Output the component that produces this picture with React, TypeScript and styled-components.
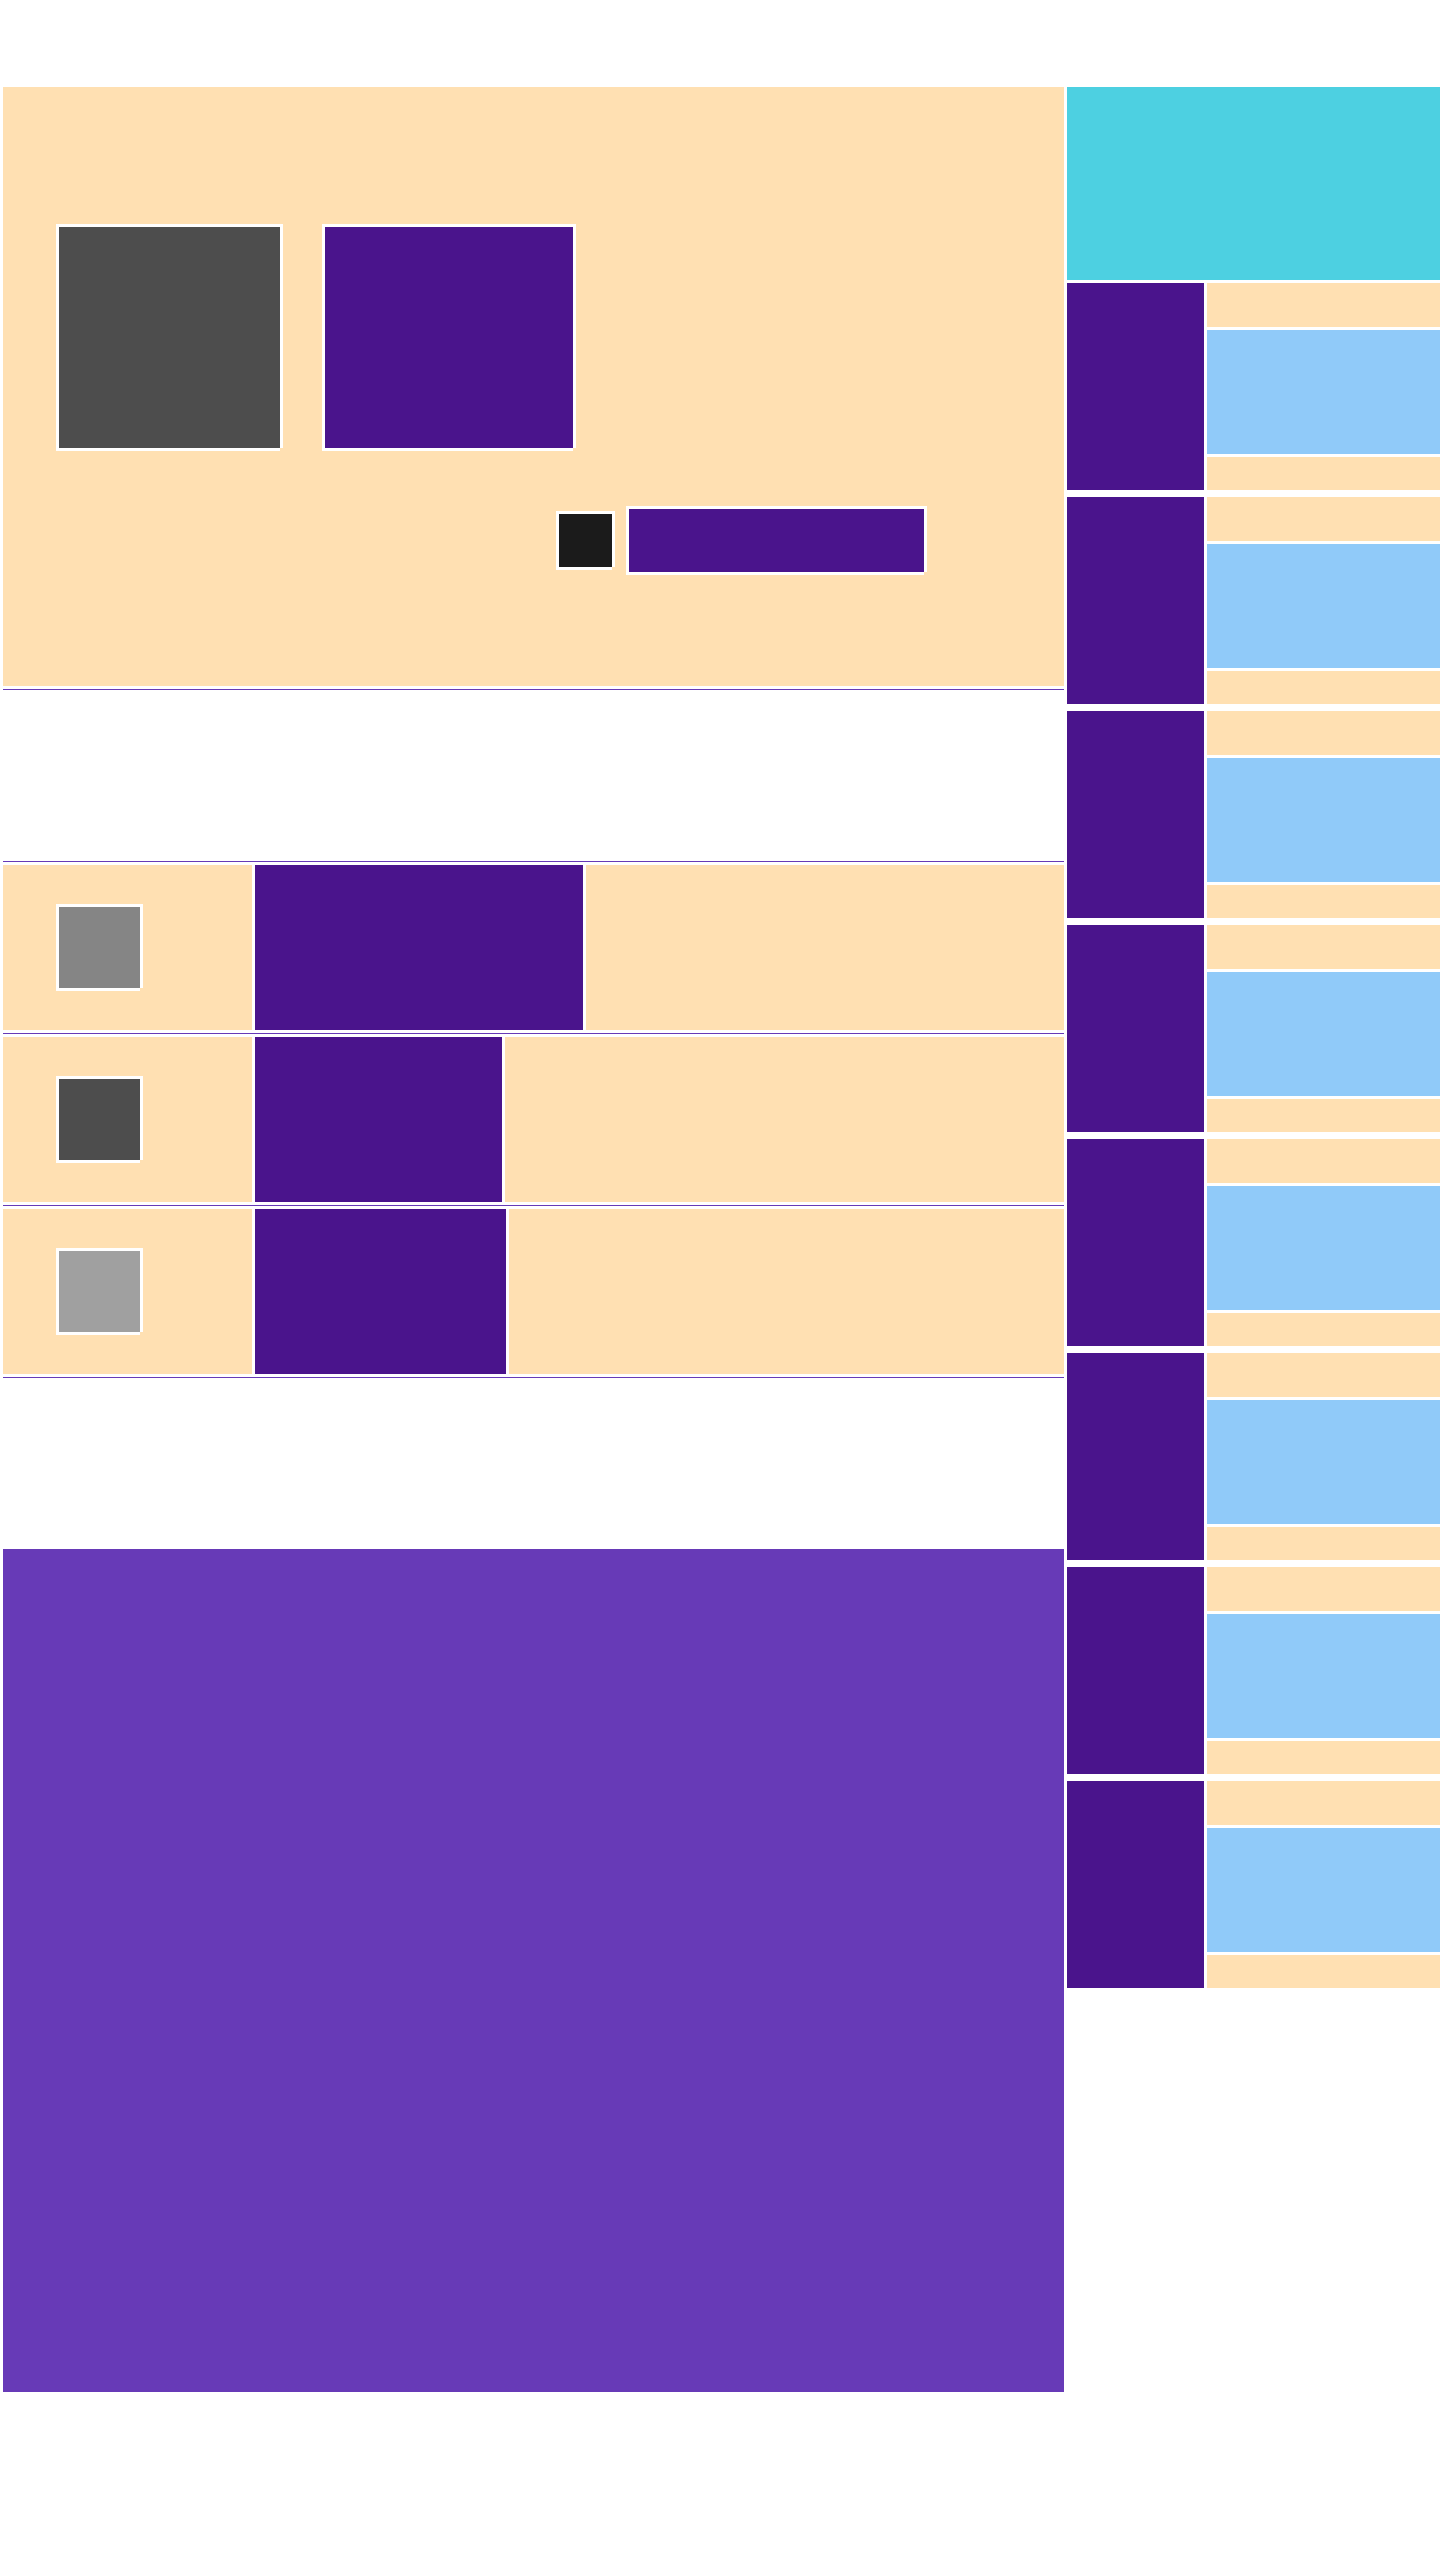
import React from "react";
import styled, { createGlobalStyle, css } from "styled-components";

const PEACH = "#FFE0B2";
const DARK_PURPLE = "#4A148C";
const DEEP_PURPLE = "#673AB7";
const CYAN = "#4DD0E1";
const BLUE = "#90CAF9";

const GlobalStyle = createGlobalStyle`
  html, body {
    margin: 0;
    padding: 0;
    background: #ffffff;
    font-family: "Liberation Sans", Arial, sans-serif;
  }
  * { box-sizing: border-box; }
`;

const framed = css`
  box-shadow:
    -3px -3px 0 #ffffff,
    3px -3px 0 #ffffff,
    -3px 3px 0 #ffffff,
    3px 0 0 #ffffff,
    0 3px 0 #ffffff;
`;

const Page = styled.div`
  display: grid;
  grid-template-columns: 1061px 373px;
  column-gap: 3px;
  padding: 87px 0 0 3px;
  width: 1440px;
  min-height: 2560px;
  align-items: start;
`;

const MainColumn = styled.main`
  display: flex;
  flex-direction: column;
`;

const Hero = styled.section`
  background: ${PEACH};
  height: 599px;
  padding: 140px 0 0 56px;
  display: flex;
  flex-direction: column;
`;

const HeroTiles = styled.div`
  display: flex;
  gap: 45px;
`;

const Tile = styled.div<{ $w: number; $h: number; $color: string }>`
  width: ${(p) => p.$w}px;
  height: ${(p) => p.$h}px;
  background: ${(p) => p.$color};
  flex: none;
  ${framed}
`;

const Controls = styled.div`
  margin-top: 61px;
  display: flex;
  align-items: center;
  justify-content: flex-end;
  gap: 17px;
  padding-right: 140px;
`;

const List = styled.div`
  margin-top: 3px;
  border-bottom: 1px solid ${DEEP_PURPLE};
`;

const Row = styled.div`
  border-top: 1px solid ${DEEP_PURPLE};
  padding: 3px 0;
`;

const RowInner = styled.div`
  height: 165px;
  display: flex;
  gap: 3px;
`;

const ThumbCell = styled.div`
  width: 249px;
  flex: none;
  background: ${PEACH};
  display: flex;
  align-items: center;
  padding-left: 56px;
`;

const TitleCell = styled.div<{ $w: number }>`
  width: ${(p) => p.$w}px;
  flex: none;
  background: ${DARK_PURPLE};
`;

const RestCell = styled.div`
  flex: 1;
  background: ${PEACH};
`;

const Feature = styled.section`
  margin-top: 171px;
  height: 843px;
  background: ${DEEP_PURPLE};
`;

const Sidebar = styled.aside`
  display: flex;
  flex-direction: column;
`;

const Banner = styled.div`
  height: 193px;
  background: ${CYAN};
  margin-bottom: 3px;
`;

const CardList = styled.div`
  display: flex;
  flex-direction: column;
  gap: 7px;
`;

const Card = styled.div`
  height: 207px;
  display: flex;
  gap: 3px;
`;

const CardThumb = styled.div`
  width: 137px;
  flex: none;
  background: ${DARK_PURPLE};
`;

const CardBody = styled.div`
  flex: 1;
  display: flex;
  flex-direction: column;
  gap: 3px;
`;

const CardBand = styled.div<{ $h: number; $color: string }>`
  height: ${(p) => p.$h}px;
  background: ${(p) => p.$color};
  flex: none;
`;

const rows = [
  { thumb: "#858585", title: 328 },
  { thumb: "#4D4D4D", title: 247 },
  { thumb: "#A0A0A0", title: 251 },
];

export default function App() {
  return (
    <>
      <GlobalStyle />
      <Page>
        <MainColumn>
          <Hero>
            <HeroTiles>
              <Tile $w={221} $h={221} $color="#4D4D4D" />
              <Tile $w={248} $h={221} $color={DARK_PURPLE} />
            </HeroTiles>
            <Controls>
              <Tile $w={53} $h={53} $color="#1B1B1B" />
              <Tile $w={295} $h={63} $color={DARK_PURPLE} />
            </Controls>
          </Hero>
          <List>
            <Row>
              <RowInner />
            </Row>
            {rows.map((r, i) => (
              <Row key={i}>
                <RowInner>
                  <ThumbCell>
                    <Tile $w={81} $h={81} $color={r.thumb} />
                  </ThumbCell>
                  <TitleCell $w={r.title} />
                  <RestCell />
                </RowInner>
              </Row>
            ))}
          </List>
          <Feature />
        </MainColumn>
        <Sidebar>
          <Banner />
          <CardList>
            {Array.from({ length: 8 }).map((_, i) => (
              <Card key={i}>
                <CardThumb />
                <CardBody>
                  <CardBand $h={44} $color={PEACH} />
                  <CardBand $h={124} $color={BLUE} />
                  <CardBand $h={33} $color={PEACH} />
                </CardBody>
              </Card>
            ))}
          </CardList>
        </Sidebar>
      </Page>
    </>
  );
}
